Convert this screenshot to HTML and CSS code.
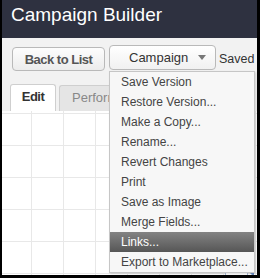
FILE: index.html
```html
<!DOCTYPE html>
<html lang="en">
  <head>
    <meta name="viewport" content="width=device-width, initial-scale=1" />
    <title>Campaign Builder</title>
    <link rel="stylesheet" href="styles.css">
  </head>
  <body>
    <div class="frame">
      <div class="header">Campaign Builder</div>

      <div class="toolbar">
        <button class="btn btn-back">Back to List</button>
        <div class="dropdown">
          <button class="btn btn-campaign">Campaign<span class="caret"></span></button>
          <ul class="menu">
            <li class="menu-item">Save Version</li>
            <li class="menu-item">Restore Version...</li>
            <li class="menu-item">Make a Copy...</li>
            <li class="menu-item">Rename...</li>
            <li class="menu-item">Revert Changes</li>
            <li class="menu-item">Print</li>
            <li class="menu-item">Save as Image</li>
            <li class="menu-item">Merge Fields...</li>
            <li class="menu-item menu-item-active">Links...</li>
            <li class="menu-item">Export to Marketplace...</li>
          </ul>
        </div>
        <span class="status">Saved</span>
      </div>

      <div class="tabs">
        <div class="tab tab-active">Edit</div>
        <div class="tab tab-clipped">Performance</div>
      </div>

      <div class="canvas">
        <div class="handle"><span class="handle-corner"></span></div>
      </div>
    </div>
  </body>
</html>
```

FILE: styles.css
```css
body {
    margin: 0;
    font-family: "Liberation Sans", Arial, sans-serif;
}
.frame {
    width: 260px;
    height: 278px;
    box-sizing: border-box;
    border-left: 2px solid #000;
    border-right: 3px solid #000;
    border-bottom: 3px solid #000;
    display: flex;
    flex-direction: column;
    overflow: hidden;
}
.header {
    height: 38px;
    box-sizing: border-box;
    padding: 3px 9px 0;
    background-color: #2e3140;
    color: #fff;
    font-size: 19px;
    line-height: 24px;
}

/* --- toolbar */
.toolbar {
    height: 46px;
    box-sizing: border-box;
    padding: 7px 0 0 10px;
    display: flex;
    align-items: flex-start;
    background-color: #f2f2f2;
}
.btn {
    box-sizing: border-box;
    margin: 0;
    font-family: "Liberation Sans", Arial, sans-serif;
    color: #555;
    background: linear-gradient(#fdfdfd, #ececec);
    border: 1px solid #b9b9b9;
    border-radius: 4px;
    padding: 0;
}
.btn-back {
    margin-top: 2px;
    width: 93px;
    height: 24px;
    font-size: 13px;
    font-weight: bold;
    letter-spacing: -0.5px;
}
.dropdown {
    position: relative;
    margin-left: 4px;
}
.btn-campaign {
    width: 107px;
    height: 25px;
    display: flex;
    align-items: center;
    padding-left: 19px;
    font-size: 13px;
    color: #333;
    background: linear-gradient(#fff, #f1f1f1);
}
.caret {
    margin-left: 10px;
    width: 0;
    height: 0;
    border-left: 4px solid transparent;
    border-right: 4px solid transparent;
    border-top: 5px solid #777;
}
.status {
    margin-left: 3px;
    margin-top: 7px;
    font-size: 12.5px;
    line-height: 14px;
    color: #333;
}

/* --- dropdown menu */
.menu {
    position: absolute;
    top: 26px;
    left: 0;
    z-index: 2;
    width: 146px;
    box-sizing: border-box;
    margin: 0;
    padding: 0;
    list-style: none;
    background-color: #f7f7f7;
    border: 1px solid #c6c6c6;
    box-shadow: 1px 1px 2px rgb(0 0 0 / 15%);
}
.menu-item {
    height: 20px;
    padding-left: 11px;
    font-size: 12px;
    line-height: 20px;
    color: #444;
    white-space: nowrap;
}
.menu-item-active {
    color: #fff;
    background: linear-gradient(#838383, #565656);
}

/* --- tabs */
.tabs {
    height: 27px;
    box-sizing: border-box;
    padding-left: 8px;
    display: flex;
    align-items: flex-end;
    gap: 3px;
    background-color: #f2f2f2;
}
.tab {
    height: 26px;
    box-sizing: border-box;
    padding: 0 12px;
    font-size: 13px;
    line-height: 24px;
    color: #888;
    background-color: #e5e5e5;
    border: 1px solid #cfcfcf;
    border-bottom: 0;
    border-radius: 3px 3px 0 0;
    white-space: nowrap;
}
/* the rest of this tab sits under the open menu */
.tab-clipped {
    width: 50px;
    overflow: hidden;
    border-right: 0;
    border-top-right-radius: 0;
}
.tab-active {
    height: 27px;
    width: 46px;
    padding: 0;
    text-align: center;
    font-weight: bold;
    letter-spacing: -0.5px;
    color: #333;
    background-color: #fff;
}

/* --- canvas grid */
.canvas {
    position: relative;
    flex: 1;
    background-color: #fff;
    background-image:
        linear-gradient(to right, #e8e8e8 1px, transparent 1px),
        linear-gradient(to bottom, #e8e8e8 1px, transparent 1px);
    background-size: 32px 32px;
    background-position: 29px 2px;
}
.handle {
    position: absolute;
    left: 223px;
    top: 161px;
    width: 23px;
    height: 10px;
    box-sizing: border-box;
    background-color: #fff;
    border: 1px solid #a9bcd9;
}
.handle-corner {
    position: absolute;
    right: -7px;
    top: -1px;
    width: 0;
    height: 0;
    border-left: 5px solid transparent;
    border-top: 5px solid #6f8fc4;
}
```
